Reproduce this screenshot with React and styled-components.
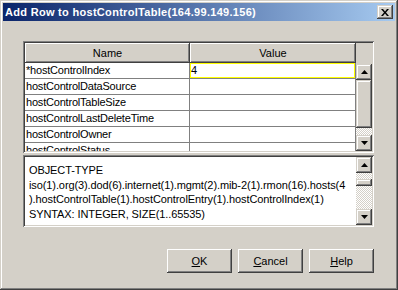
import styled, { createGlobalStyle } from "styled-components";

const GlobalStyle = createGlobalStyle`
  html, body {
    margin: 0;
    padding: 0;
    background: #d4d0c8;
  }
  body {
    font-family: "Liberation Sans", Arial, sans-serif;
    font-size: 11px;
    color: #000;
  }
`;

const FACE = "#d4d0c8";
const raised = `
  box-shadow: inset -1px -1px #404040, inset 1px 1px ${FACE}, inset -2px -2px #808080, inset 2px 2px #fff;
`;
const sunken = `
  box-shadow: inset 1px 1px #808080, inset -1px -1px #fff, inset 2px 2px #404040, inset -2px -2px ${FACE};
`;
const checker = `
  background-color: #fff;
  background-image: conic-gradient(${FACE} 25%, #fff 0 50%, ${FACE} 0 75%, #fff 0);
  background-size: 2px 2px;
`;

const Frame = styled.div`
  box-sizing: border-box;
  width: 398px;
  height: 290px;
  padding: 3px;
  background: ${FACE};
  box-shadow: inset -1px -1px #404040, inset 1px 1px ${FACE}, inset -2px -2px #808080, inset 2px 2px #fff;
  display: flex;
  flex-direction: column;
`;

const TitleBar = styled.div`
  height: 18px;
  flex: none;
  display: flex;
  align-items: center;
  justify-content: space-between;
  padding: 0 2px 0 2px;
  background: linear-gradient(to right, #0a246a, #a6caf0);
`;

const Title = styled.span`
  color: #fff;
  font-weight: bold;
  font-size: 11px;
  white-space: nowrap;
  letter-spacing: 0.3px;
`;

const CloseButton = styled.div`
  width: 16px;
  height: 14px;
  box-sizing: border-box;
  background: ${FACE};
  ${raised}
  display: flex;
  align-items: center;
  justify-content: center;
`;

const Body = styled.div`
  flex: 1;
  display: flex;
  flex-direction: column;
  padding: 20px 21px 14px 20px;
`;

const Panel = styled.div`
  box-sizing: border-box;
  height: ${(p) => p.$height}px;
  margin-top: ${(p) => p.$gap || 0}px;
  padding: 2px;
  background: #fff;
  ${sunken}
  display: flex;
  overflow: hidden;
`;

const Table = styled.div`
  flex: 1;
  min-width: 0;
  display: flex;
  flex-direction: column;
  overflow: hidden;
`;

const HeaderRow = styled.div`
  display: grid;
  grid-template-columns: 165px 166px;
  height: 20px;
  flex: none;
`;

const HeaderCell = styled.div`
  background: ${FACE};
  box-shadow: inset -1px -1px #404040, inset 1px 1px #fff, inset -2px -2px #808080;
  display: flex;
  align-items: center;
  justify-content: center;
  padding-bottom: 1px;
`;

const Row = styled.div`
  display: grid;
  grid-template-columns: 165px 166px;
  height: 16px;
  flex: none;
`;

const Cell = styled.div`
  box-sizing: border-box;
  border-bottom: 1px solid #808080;
  border-right: 1px solid #808080;
  padding-left: 1px;
  line-height: 15px;
  letter-spacing: -0.2px;
  white-space: nowrap;
  overflow: hidden;
  ${(p) => p.$focus && `box-shadow: inset 0 0 0 1px #ffff00;`}
`;

const ScrollColumn = styled.div`
  width: 16px;
  flex: none;
  display: flex;
  flex-direction: column;
  background: ${FACE};
`;

const Corner = styled.div`
  height: 21px;
  flex: none;
  background: ${FACE};
`;

const ScrollBar = styled.div`
  flex: 1;
  display: flex;
  flex-direction: column;
  ${checker}
`;

const ArrowButton = styled.div`
  height: 16px;
  flex: none;
  box-sizing: border-box;
  background: ${FACE};
  ${raised}
  display: flex;
  align-items: center;
  justify-content: center;
`;

const Track = styled.div`
  flex: 1;
  display: flex;
  flex-direction: column;
`;

const Thumb = styled.div`
  height: ${(p) => p.$size}px;
  margin-top: ${(p) => p.$offset || 0}px;
  flex: none;
  background: ${FACE};
  ${raised}
`;

const TextArea = styled.div`
  flex: 1;
  min-width: 0;
  padding: 6px 0 0 4px;
  overflow: hidden;
`;

const Line = styled.div`
  white-space: pre;
  line-height: 14.5px;
  letter-spacing: -0.1px;
`;

const ButtonRow = styled.div`
  display: flex;
  justify-content: flex-end;
  gap: 6px;
  margin-top: 22px;
`;

const Button = styled.div`
  width: 65px;
  height: 24px;
  box-sizing: border-box;
  background: ${FACE};
  box-shadow: inset -1px -1px #404040, inset 1px 1px #fff, inset -2px -2px #808080, inset 2px 2px ${FACE};
  display: flex;
  align-items: center;
  justify-content: center;
  padding-bottom: 1px;
  u {
    text-decoration: underline;
    text-underline-offset: 1px;
  }
`;

const Arrow = ({ up }) => (
  <svg width="7" height="4" viewBox="0 0 7 4">
    <path d={up ? "M3.5 0 L7 4 L0 4 Z" : "M0 0 L7 0 L3.5 4 Z"} fill="#000" />
  </svg>
);

const Scroll = ({ thumb, offset, corner }) => (
  <ScrollColumn>
    {corner && <Corner />}
    <ScrollBar>
      <ArrowButton>
        <Arrow up />
      </ArrowButton>
      <Track>
        <Thumb $size={thumb} $offset={offset} />
      </Track>
      <ArrowButton>
        <Arrow />
      </ArrowButton>
    </ScrollBar>
  </ScrollColumn>
);

const rows = [
  "*hostControlIndex",
  "hostControlDataSource",
  "hostControlTableSize",
  "hostControlLastDeleteTime",
  "hostControlOwner",
  "hostControlStatus",
];

const details = [
  "OBJECT-TYPE",
  "iso(1).org(3).dod(6).internet(1).mgmt(2).mib-2(1).rmon(16).hosts(4",
  ").hostControlTable(1).hostControlEntry(1).hostControlIndex(1)",
  "SYNTAX: INTEGER, SIZE(1..65535)",
];

export default function App() {
  return (
    <>
      <GlobalStyle />
      <Frame>
        <TitleBar>
          <Title>Add Row to hostControlTable(164.99.149.156)</Title>
          <CloseButton>
            <svg width="8" height="7" viewBox="0 0 8 7">
              <path d="M0 0h2l2 2.5L6 0h2L5 3.5 8 7H6L4 4.5 2 7H0l3-3.5z" fill="#000" />
            </svg>
          </CloseButton>
        </TitleBar>
        <Body>
          <Panel $height={112}>
            <Table>
              <HeaderRow>
                <HeaderCell>Name</HeaderCell>
                <HeaderCell>Value</HeaderCell>
              </HeaderRow>
              {rows.map((name, i) => (
                <Row key={name}>
                  <Cell>{name}</Cell>
                  <Cell $focus={i === 0}>{i === 0 ? "4" : ""}</Cell>
                </Row>
              ))}
            </Table>
            <Scroll thumb={48} corner />
          </Panel>
          <Panel $height={72} $gap={2}>
            <TextArea>
              {details.map((t) => (
                <Line key={t}>{t}</Line>
              ))}
            </TextArea>
            <Scroll thumb={7} offset={6} />
          </Panel>
          <ButtonRow>
            <Button>
              <span>
                <u>O</u>K
              </span>
            </Button>
            <Button>
              <span>
                <u>C</u>ancel
              </span>
            </Button>
            <Button>
              <span>
                <u>H</u>elp
              </span>
            </Button>
          </ButtonRow>
        </Body>
      </Frame>
    </>
  );
}
